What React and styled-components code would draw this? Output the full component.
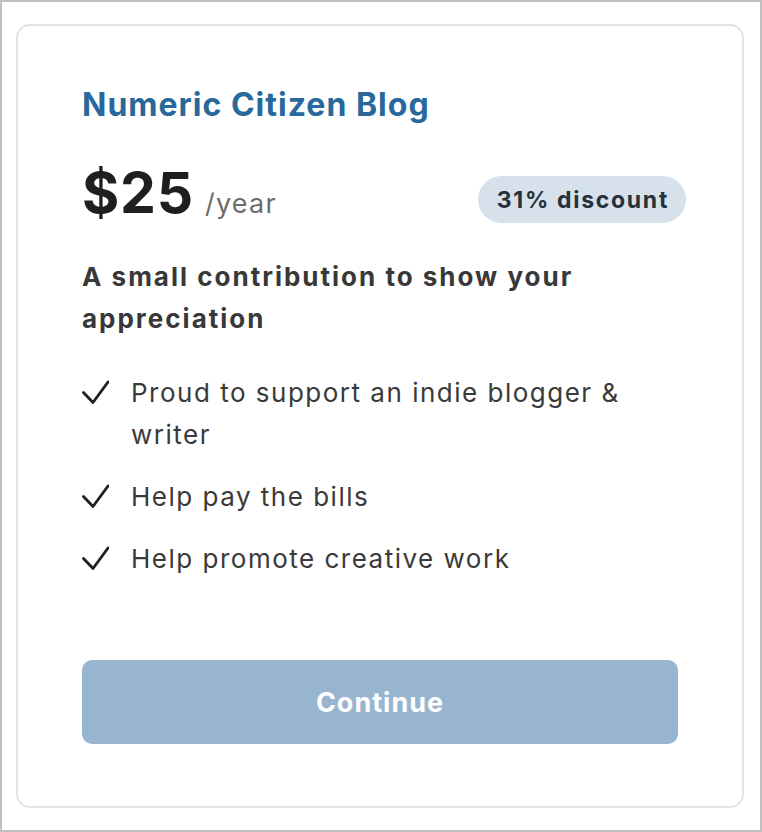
import React from 'react';
import styled, { createGlobalStyle } from 'styled-components';

const GlobalStyle = createGlobalStyle`
  body {
    margin: 0;
    font-family: Inter, "Noto Sans", "Liberation Sans", sans-serif;
    -webkit-font-smoothing: antialiased;
  }
`;

const Frame = styled.div`
  width: 762px;
  height: 832px;
  box-sizing: border-box;
  border: 2px solid #bfbfbf;
  padding: 22px 16px 22px 14px;
  background: #fff;
`;

const Card = styled.div`
  height: 100%;
  box-sizing: border-box;
  border: 2px solid #e3e3e3;
  border-radius: 14px;
  padding: 59px 56px 0 64px;
  display: flex;
  flex-direction: column;
`;

const Title = styled.h1`
  margin: 0;
  font-size: 32px;
  line-height: 40px;
  font-weight: 700;
  color: #28689b;
  letter-spacing: 1px;
`;

const PriceRow = styled.div`
  display: flex;
  align-items: flex-end;
  justify-content: space-between;
  margin-top: 36px;
`;

const Price = styled.div`
  display: flex;
  align-items: baseline;
  gap: 11px;
`;

const Amount = styled.span`
  font-size: 57px;
  line-height: 64px;
  font-weight: 700;
  color: #1f1f1f;
  letter-spacing: 0.8px;
`;

const Period = styled.span`
  font-size: 27px;
  color: #6c6c6c;
  letter-spacing: 1.2px;
`;

const Badge = styled.span`
  display: inline-flex;
  align-items: center;
  height: 47px;
  margin-bottom: 2px;
  padding: 0 17px 0 19px;
  border-radius: 24px;
  background: #d6e1eb;
  color: #26313b;
  font-size: 23px;
  font-weight: 700;
  letter-spacing: 1.7px;
`;

const Subtitle = styled.p`
  margin: 31px 0 0;
  font-size: 26px;
  line-height: 42px;
  font-weight: 700;
  color: #383838;
  letter-spacing: 2px;
`;

const List = styled.ul`
  list-style: none;
  margin: 32px 0 0;
  padding: 0;
  display: flex;
  flex-direction: column;
  gap: 20px;
`;

const Item = styled.li`
  display: flex;
  align-items: flex-start;
  gap: 22px;
  font-size: 26px;
  line-height: 42px;
  color: #3a3a3a;
  letter-spacing: 1.5px;
`;

const Tick = styled.svg`
  flex: none;
  width: 27px;
  height: 42px;
`;

const Button = styled.button`
  margin-top: 80px;
  width: 596px;
  height: 84px;
  border: none;
  border-radius: 10px;
  background: #97b5cf;
  color: #fff;
  font-family: inherit;
  font-size: 27px;
  font-weight: 700;
  letter-spacing: 1px;
  cursor: pointer;
`;

const features = [
  'Proud to support an indie blogger & writer',
  'Help pay the bills',
  'Help promote creative work',
];

function Check() {
  return (
    <Tick viewBox="0 0 27 42">
      <polyline
        points="1.5,20.5 11,30.5 26,10"
        fill="none"
        stroke="#1f1f1f"
        strokeWidth="2.8"
        strokeLinecap="round"
        strokeLinejoin="round"
      />
    </Tick>
  );
}

export default function App() {
  return (
    <>
      <GlobalStyle />
      <Frame>
        <Card>
          <Title>Numeric Citizen Blog</Title>
          <PriceRow>
            <Price>
              <Amount>$25</Amount>
              <Period>/year</Period>
            </Price>
            <Badge>31% discount</Badge>
          </PriceRow>
          <Subtitle>A small contribution to show your appreciation</Subtitle>
          <List>
            {features.map((f) => (
              <Item key={f}>
                <Check />
                <span>{f}</span>
              </Item>
            ))}
          </List>
          <Button type="button">Continue</Button>
        </Card>
      </Frame>
    </>
  );
}
